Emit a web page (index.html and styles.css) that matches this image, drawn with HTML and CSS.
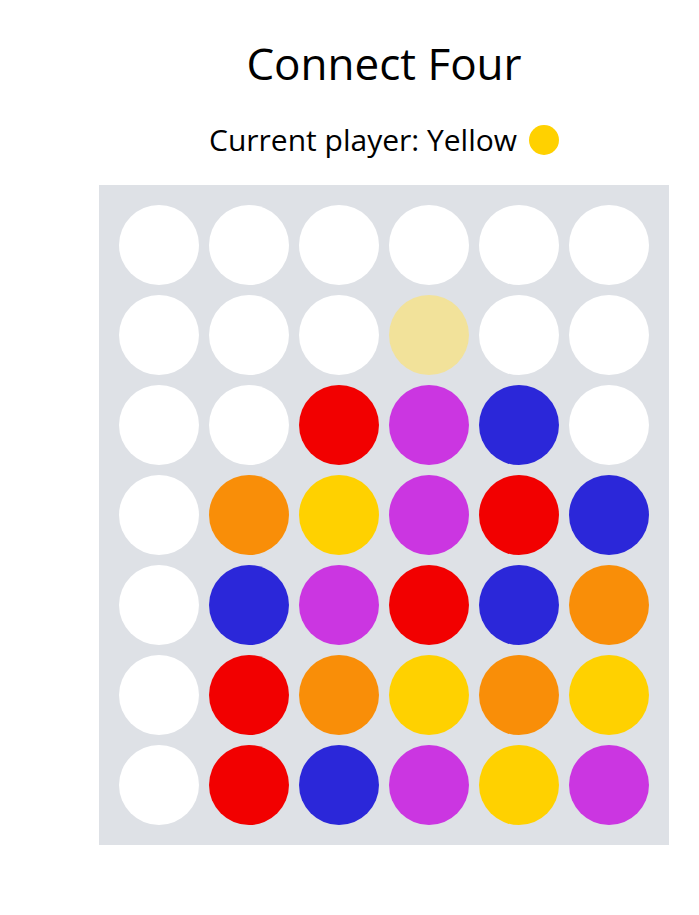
FILE: index.html
```html
<!DOCTYPE html>
<html>
<head>
<meta charset="utf-8">
<link rel="stylesheet" href="styles.css">
</head>
<body>
<div class="app">
  <h1 class="title">Connect Four</h1>
  <div class="status">Current player: Yellow <span class="dot yellow"></span></div>
  <div class="board">
    <div class="cell"></div><div class="cell"></div><div class="cell"></div><div class="cell"></div><div class="cell"></div><div class="cell"></div>
    <div class="cell"></div><div class="cell"></div><div class="cell"></div><div class="cell ghost"></div><div class="cell"></div><div class="cell"></div>
    <div class="cell"></div><div class="cell"></div><div class="cell red"></div><div class="cell purple"></div><div class="cell blue"></div><div class="cell"></div>
    <div class="cell"></div><div class="cell orange"></div><div class="cell yellow"></div><div class="cell purple"></div><div class="cell red"></div><div class="cell blue"></div>
    <div class="cell"></div><div class="cell blue"></div><div class="cell purple"></div><div class="cell red"></div><div class="cell blue"></div><div class="cell orange"></div>
    <div class="cell"></div><div class="cell red"></div><div class="cell orange"></div><div class="cell yellow"></div><div class="cell orange"></div><div class="cell yellow"></div>
    <div class="cell"></div><div class="cell red"></div><div class="cell blue"></div><div class="cell purple"></div><div class="cell yellow"></div><div class="cell purple"></div>
  </div>
</div>
</body>
</html>
```
FILE: styles.css
```css
html, body {
  margin: 0;
  padding: 0;
  background: #ffffff;
}
body {
  font-family: "Open Sans", sans-serif;
  color: #000;
}
.app {
  width: 570px;
  margin-left: 99px;
  display: flex;
  flex-direction: column;
  align-items: center;
}
.title {
  margin: 33px 0 0 0;
  font-size: 44px;
  font-weight: 400;
  line-height: 60px;
}
.status {
  margin-top: 27px;
  font-size: 30px;
  line-height: 40px;
  display: flex;
  align-items: center;
  gap: 12px;
}
.dot {
  width: 30px;
  height: 30px;
  border-radius: 50%;
  display: inline-block;
}
.board {
  margin-top: 25px;
  width: 570px;
  box-sizing: border-box;
  padding: 20px;
  background: #dee1e6;
  display: grid;
  grid-template-columns: repeat(6, 80px);
  grid-auto-rows: 80px;
  gap: 10px;
}
.cell {
  border-radius: 50%;
  background: #ffffff;
}
.red { background: #f20000; }
.orange { background: #f98e08; }
.yellow { background: #ffd100; }
.purple { background: #cb36e1; }
.blue { background: #2b27d9; }
.ghost { background: #f2e29a; }
```
